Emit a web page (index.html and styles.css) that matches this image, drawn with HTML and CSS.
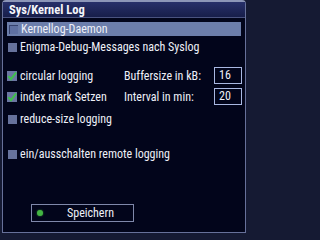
FILE: index.html
```html
<!DOCTYPE html>
<html>
<head>
<meta charset="utf-8">
<link rel="stylesheet" href="styles.css">
</head>
<body>
<div class="window">
  <div class="frame">
    <div class="titlebar"><span class="title">Sys/Kernel Log</span></div>
    <div class="content">
      <div class="row row-selected">
        <span class="box box-sel"></span><span class="text">Kernellog-Daemon</span>
      </div>
      <div class="row row-2">
        <span class="box"></span><span class="text">Enigma-Debug-Messages nach Syslog</span>
      </div>
      <div class="grid-row row-3">
        <div class="left">
          <svg class="check" width="10" height="10" viewBox="0 0 10 10"><rect x="0" y="0" width="10" height="10" fill="#6b77a2"/><path d="M1.3 5.2 L4 8.2 L9.2 1.4" fill="none" stroke="#3fc24a" stroke-width="2"/></svg>
          <span class="text">circular logging</span>
        </div>
        <span class="label">Buffersize in kB:</span>
        <span class="input">16</span>
      </div>
      <div class="grid-row row-4">
        <div class="left">
          <svg class="check" width="10" height="10" viewBox="0 0 10 10"><rect x="0" y="0" width="10" height="10" fill="#6b77a2"/><path d="M1.3 5.2 L4 8.2 L9.2 1.4" fill="none" stroke="#3fc24a" stroke-width="2"/></svg>
          <span class="text">index mark Setzen</span>
        </div>
        <span class="label">Interval in min:</span>
        <span class="input">20</span>
      </div>
      <div class="row row-5">
        <span class="box"></span><span class="text">reduce-size logging</span>
      </div>
      <div class="row row-6">
        <span class="box"></span><span class="text">ein/ausschalten remote logging</span>
      </div>
      <div class="button">
        <span class="dot"></span><span class="btn-text">Speichern</span>
      </div>
    </div>
  </div>
</div>
</body>
</html>
```
FILE: styles.css
```css
html, body {
  margin: 0;
  padding: 0;
  background: #151a33;
}
.window {
  width: 250px;
  height: 234px;
  box-sizing: border-box;
  padding: 0 4px 1px 2px;
  background: #151a33;
  font-family: Roboto, "Open Sans", sans-serif;
  font-stretch: 75%;
  color: #eef0f8;
}
.frame {
  height: 100%;
  box-sizing: border-box;
  border: 1px solid #67719a;
  border-top: 2px solid #8c96b8;
  border-radius: 4px 4px 0 0;
  background: #02051b;
  display: flex;
  flex-direction: column;
}
.titlebar {
  height: 15px;
  background: linear-gradient(#27306a, #171e4a);
  border-bottom: 1px solid #4a5380;
  padding-left: 6px;
  display: flex;
  align-items: center;
}
.title {
  font-weight: bold;
  font-size: 12.5px;
  color: #f4f5fa;
}
.content {
  padding: 0 3px 0 4px;
  display: flex;
  flex-direction: column;
}
.row {
  display: flex;
  align-items: center;
  height: 14px;
  font-size: 12px;
}
.text {
  margin-left: 3px;
  white-space: nowrap;
}
.box {
  width: 9px;
  height: 9px;
  background: #66729c;
  flex: none;
  margin-left: 1px;
}
.row-selected {
  margin-top: 4px;
  margin-right: 1px;
  background: #6c7eab;
  padding-left: 1px;
}
.box-sel {
  background: #5f70a2;
  border-top: 1px solid #36426e;
  border-left: 1px solid #36426e;
  width: 8px;
  height: 8px;
}
.row-2 {
  margin-top: 4px;
}
.grid-row {
  display: grid;
  grid-template-columns: 117px 1fr 28px;
  align-items: center;
  height: 17px;
  font-size: 12px;
}
.row-3 {
  margin-top: 13px;
}
.row-4 {
  margin-top: 4px;
}
.left {
  display: flex;
  align-items: center;
}
.check {
  flex: none;
  display: block;
}
.label {
  white-space: nowrap;
}
.input {
  box-sizing: border-box;
  height: 17px;
  border: 1px solid #a9b8e2;
  padding-left: 4px;
  line-height: 15px;
}
.row-5 {
  margin-top: 7px;
}
.row-6 {
  margin-top: 21px;
}
.button {
  margin-top: 43px;
  margin-left: 24px;
  width: 103px;
  height: 18px;
  box-sizing: border-box;
  border: 1px solid #7f88aa;
  display: flex;
  align-items: center;
  font-size: 12px;
}
.dot {
  width: 6px;
  height: 6px;
  border-radius: 50%;
  background: #43b443;
  box-shadow: 0 0 2px #2e8a2e;
  margin-left: 5px;
}
.btn-text {
  margin-left: 24px;
}
```
